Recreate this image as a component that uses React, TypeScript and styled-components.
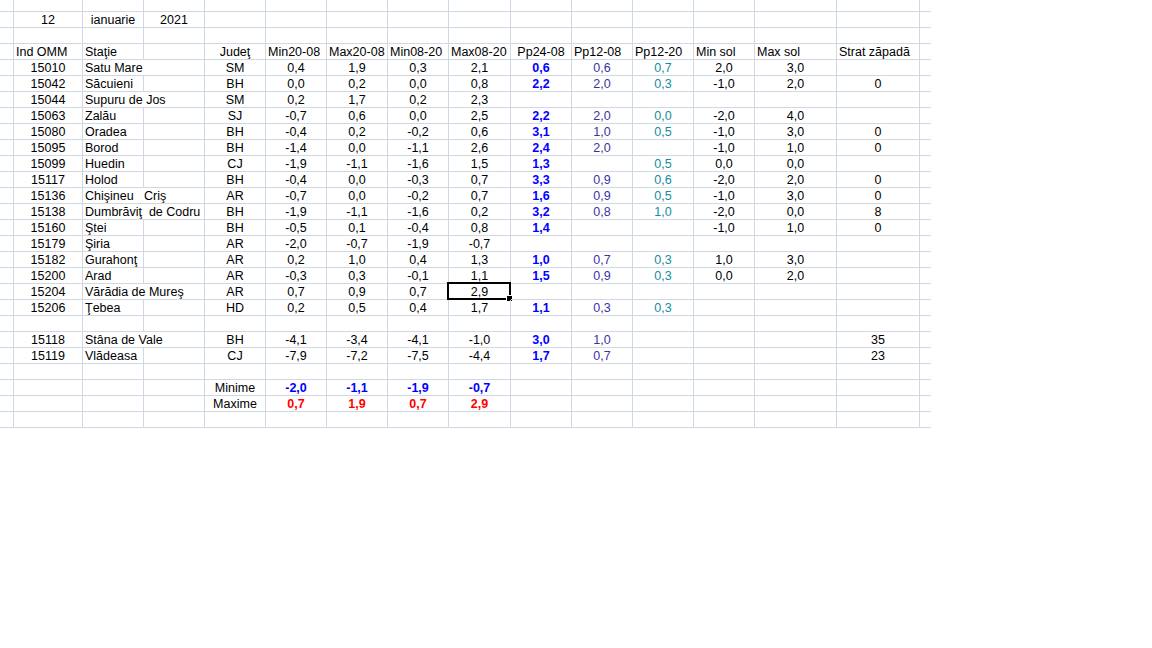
import React from 'react'
import styled, { createGlobalStyle, css } from 'styled-components'

const GlobalStyle = createGlobalStyle`
  html, body {
    margin: 0;
    padding: 0;
    background: #ffffff;
  }
  body {
    font-family: "Liberation Sans", Arial, sans-serif;
  }
`

type Tone = 'plain' | 'rain' | 'rain12' | 'rain1220' | 'min' | 'max'
type Align = 'left' | 'center'

interface CellData {
  t?: string
  span?: number
  align?: Align
  tone?: Tone
  selected?: boolean
}

// column widths incl. the 1px grid line on the right
const widths = [14, 69, 61, 61, 61, 61, 61, 61, 62, 61, 61, 61, 61, 82, 83, 11]

const toneColor: Record<Tone, string> = {
  plain: '#000000',
  rain: '#0000ff',
  rain12: '#3a33a6',
  rain1220: '#128e9c',
  min: '#0000ff',
  max: '#ff0000',
}

const Sheet = styled.div`
  display: grid;
  grid-template-columns: ${widths.map((w) => `${w}px`).join(' ')};
  grid-template-rows: 12px repeat(26, 16px);
  width: max-content;
`

const Cell = styled.div<{ $align: Align; $tone: Tone; $span: number; $last: boolean }>`
  position: relative;
  box-sizing: border-box;
  grid-column: span ${(p) => p.$span};
  border-bottom: 1px solid #d0d7e5;
  border-right: ${(p) => (p.$last ? 'none' : '1px solid #d0d7e5')};
  padding: 0 2px;
  font-size: 12.5px;
  line-height: 16px;
  white-space: pre;
  overflow: visible;
  text-align: ${(p) => p.$align};
  color: ${(p) => toneColor[p.$tone]};
  ${(p) =>
    (p.$tone === 'rain' || p.$tone === 'min' || p.$tone === 'max') &&
    css`
      font-weight: bold;
    `}
`

const Selection = styled.span`
  position: absolute;
  left: -2px;
  top: -2px;
  right: -1px;
  bottom: -1px;
  border: 2px solid #000000;
  pointer-events: none;
`

const FillHandle = styled.span`
  position: absolute;
  right: -3px;
  bottom: -3px;
  width: 5px;
  height: 5px;
  background: #000000;
  border-left: 1px solid #ffffff;
  border-top: 1px solid #ffffff;
`

const blank = (n: number): CellData[] => Array.from({ length: n }, () => ({}))

function station(
  ind: string,
  name: string,
  jud: string,
  temps: string[],
  pp24: string,
  pp12: string,
  pp1220: string,
  minSol: string,
  maxSol: string,
  strat: string,
  wide = false,
  selectMax = false
): CellData[] {
  const nameCells: CellData[] = wide
    ? [{ t: name, align: 'left', span: 2 }]
    : [{ t: name, align: 'left' }, {}]
  return [
    {},
    { t: ind, align: 'center' },
    ...nameCells,
    { t: jud, align: 'center' },
    ...temps.map((v, i) => ({ t: v, align: 'center' as Align, selected: selectMax && i === 3 })),
    { t: pp24, align: 'center', tone: 'rain' },
    { t: pp12, align: 'center', tone: 'rain12' },
    { t: pp1220, align: 'center', tone: 'rain1220' },
    { t: minSol, align: 'center' },
    { t: maxSol, align: 'center' },
    { t: strat, align: 'center' },
    {},
  ]
}

const header: CellData[] = [
  {},
  { t: 'Ind OMM', align: 'left' },
  { t: 'Staţie', align: 'left' },
  {},
  { t: 'Judeţ', align: 'center' },
  { t: 'Min20-08', align: 'left' },
  { t: 'Max20-08', align: 'left' },
  { t: 'Min08-20', align: 'left' },
  { t: 'Max08-20', align: 'left' },
  { t: 'Pp24-08', align: 'center' },
  { t: 'Pp12-08', align: 'left' },
  { t: 'Pp12-20', align: 'left' },
  { t: 'Min sol', align: 'left' },
  { t: 'Max sol', align: 'left' },
  { t: 'Strat zăpadă', align: 'left' },
  {},
]

const summary = (label: string, values: string[], tone: Tone): CellData[] => [
  ...blank(4),
  { t: label, align: 'center' },
  ...values.map((v) => ({ t: v, align: 'center' as Align, tone })),
  ...blank(7),
]

const rows: CellData[][] = [
  blank(16),
  [{}, { t: '12', align: 'center' }, { t: 'ianuarie', align: 'center' }, { t: '2021', align: 'center' }, ...blank(12)],
  blank(16),
  header,
  station('15010', 'Satu Mare', 'SM', ['0,4', '1,9', '0,3', '2,1'], '0,6', '0,6', '0,7', '2,0', '3,0', '', true),
  station('15042', 'Săcuieni', 'BH', ['0,0', '0,2', '0,0', '0,8'], '2,2', '2,0', '0,3', '-1,0', '2,0', '0'),
  station('15044', 'Supuru de Jos', 'SM', ['0,2', '1,7', '0,2', '2,3'], '', '', '', '', '', '', true),
  station('15063', 'Zalău', 'SJ', ['-0,7', '0,6', '0,0', '2,5'], '2,2', '2,0', '0,0', '-2,0', '4,0', ''),
  station('15080', 'Oradea', 'BH', ['-0,4', '0,2', '-0,2', '0,6'], '3,1', '1,0', '0,5', '-1,0', '3,0', '0'),
  station('15095', 'Borod', 'BH', ['-1,4', '0,0', '-1,1', '2,6'], '2,4', '2,0', '', '-1,0', '1,0', '0'),
  station('15099', 'Huedin', 'CJ', ['-1,9', '-1,1', '-1,6', '1,5'], '1,3', '', '0,5', '0,0', '0,0', ''),
  station('15117', 'Holod', 'BH', ['-0,4', '0,0', '-0,3', '0,7'], '3,3', '0,9', '0,6', '-2,0', '2,0', '0'),
  station('15136', 'Chişineu   Criş', 'AR', ['-0,7', '0,0', '-0,2', '0,7'], '1,6', '0,9', '0,5', '-1,0', '3,0', '0', true),
  station('15138', 'Dumbrăviţ  de Codru', 'BH', ['-1,9', '-1,1', '-1,6', '0,2'], '3,2', '0,8', '1,0', '-2,0', '0,0', '8', true),
  station('15160', 'Ştei', 'BH', ['-0,5', '0,1', '-0,4', '0,8'], '1,4', '', '', '-1,0', '1,0', '0'),
  station('15179', 'Şiria', 'AR', ['-2,0', '-0,7', '-1,9', '-0,7'], '', '', '', '', '', ''),
  station('15182', 'Gurahonţ', 'AR', ['0,2', '1,0', '0,4', '1,3'], '1,0', '0,7', '0,3', '1,0', '3,0', ''),
  station('15200', 'Arad', 'AR', ['-0,3', '0,3', '-0,1', '1,1'], '1,5', '0,9', '0,3', '0,0', '2,0', ''),
  station('15204', 'Vărădia de Mureş', 'AR', ['0,7', '0,9', '0,7', '2,9'], '', '', '', '', '', '', true, true),
  station('15206', 'Ţebea', 'HD', ['0,2', '0,5', '0,4', '1,7'], '1,1', '0,3', '0,3', '', '', ''),
  blank(16),
  station('15118', 'Stâna de Vale', 'BH', ['-4,1', '-3,4', '-4,1', '-1,0'], '3,0', '1,0', '', '', '', '35', true),
  station('15119', 'Vlădeasa', 'CJ', ['-7,9', '-7,2', '-7,5', '-4,4'], '1,7', '0,7', '', '', '', '23'),
  blank(16),
  summary('Minime', ['-2,0', '-1,1', '-1,9', '-0,7'], 'min'),
  summary('Maxime', ['0,7', '1,9', '0,7', '2,9'], 'max'),
  blank(16),
]

function App() {
  return (
    <>
      <GlobalStyle />
      <Sheet>
        {rows.map((row, r) => {
          let col = 0
          return row.map((c, i) => {
            const span = c.span ?? 1
            col += span
            return (
              <Cell
                key={`${r}-${i}`}
                $align={c.align ?? 'left'}
                $tone={c.tone ?? 'plain'}
                $span={span}
                $last={col === widths.length}
              >
                {c.t}
                {c.selected && (
                  <Selection>
                    <FillHandle />
                  </Selection>
                )}
              </Cell>
            )
          })
        })}
      </Sheet>
    </>
  )
}

export default App
